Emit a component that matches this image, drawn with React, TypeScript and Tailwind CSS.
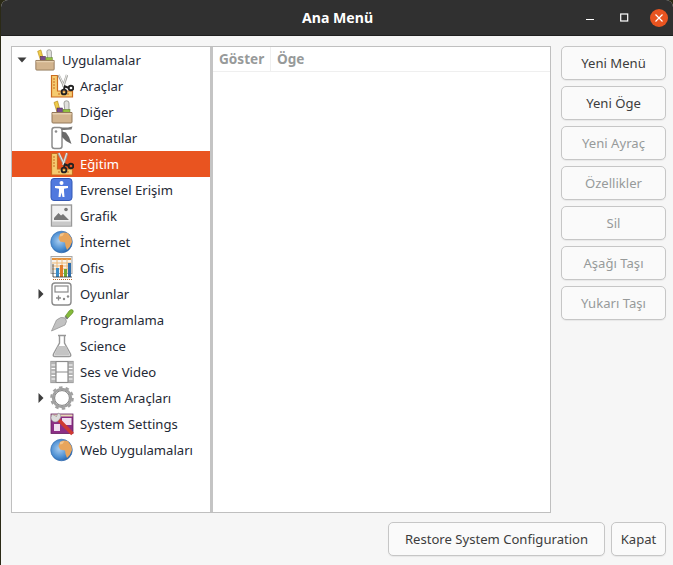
import React from "react";

const Toolbox = ({ s = 24 }: { s?: number }) => (
  <svg width={s} height={s} viewBox="0 0 24 24">
    <path d="M4 2.500 L7.500 1 L10.500 12 L7 12 Z" fill="#efcc4a" stroke="#b98d1b" strokeWidth=".7" />
    <path d="M14 3 Q14 0.800 16.500 0.800 Q19 0.800 19 3 V10 L15 12 Z" fill="#e0e0dc" stroke="#8b8b85" strokeWidth=".8" />
    <rect x="7" y="8" width="5.500" height="4.500" fill="#7a4a8c" stroke="#3f2348" strokeWidth=".5" />
    <rect x="13" y="9.500" width="7" height="3.500" fill="#93c040" stroke="#55761f" strokeWidth=".5" />
    <path d="M2 12.500 H22 V22 Q22 23 21 23 H3 Q2 23 2 22 Z" fill="#d2b48e" stroke="#93785a" strokeWidth="1" />
    <path d="M2.500 13 H21.500 V14.500 H2.500 Z" fill="#e6d0b0" />
  </svg>
);

const Ruler = () => (
  <svg width="24" height="24" viewBox="0 0 24 24">
    <path d="M1.500 1.500 H7.500 V17 H22.500 V23 H1.500 Z" fill="#f5cb70" stroke="#cb6b1e" strokeWidth="1.200" />
    <path d="M3 5h2M3 8h2M3 11h2M3 14h2M9 19v2M12 19v2M15 19v2M18 19v2" stroke="#cb6b1e" strokeWidth="1" />
    <path d="M8.500 1 L14.500 13 M17 1 L13 13" stroke="#a3a39f" strokeWidth="2.400" />
    <path d="M9 1 L14.500 13 M16.700 1 L13 13" stroke="#f2f2ef" strokeWidth=".9" />
    <circle cx="14" cy="18" r="2.400" fill="none" stroke="#222" strokeWidth="1.900" />
    <circle cx="21" cy="14" r="2.300" fill="none" stroke="#222" strokeWidth="1.900" />
    <path d="M14 12 L19 14 M14.500 13 L14 16" stroke="#222" strokeWidth="1.900" />
  </svg>
);

const Knife = () => (
  <svg width="24" height="24" viewBox="0 0 24 24">
    <rect x="2" y="1.500" width="10" height="21" rx="2.500" fill="#fff" stroke="#8c8c8c" strokeWidth="1.500" />
    <circle cx="6" cy="5.500" r="1.300" fill="#8c8c8c" />
    <path d="M11.500 1.500 H18 L22.500 0.500 L21.500 3.500 L14 4 L11.500 4 Z" fill="#777" />
    <path d="M12 5.500 L16 6.500 L19 11 L21.500 18 L16 15 L12 11 Z" fill="#6a6a6a" />
  </svg>
);

const Access = () => (
  <svg width="24" height="24" viewBox="0 0 24 24">
    <rect x="1" y="0.500" width="21" height="22" rx="3" fill="#5079de" stroke="#3358b5" strokeWidth="1" />
    <circle cx="11.500" cy="5" r="2" fill="#fff" />
    <path d="M5 8 H18 V10 L14 10.800 V13 L14.500 19 H12.500 L11.500 14.500 L10.500 19 H8.500 L9 13 V10.800 L5 10 Z" fill="#fff" />
  </svg>
);

const Graphic = () => (
  <svg width="24" height="24" viewBox="0 0 24 24">
    <rect x="1.500" y="1" width="20" height="21" fill="#f1f1f1" stroke="#999" strokeWidth="1.400" />
    <path d="M4 14 L8.500 9 L11 11.500 L13 10 L19 16 H4 Z" fill="#777" />
    <circle cx="16" cy="5.500" r="1.800" fill="#777" />
    <rect x="2" y="17.500" width="19" height="4" fill="#c9c9c9" />
  </svg>
);

const Globe = ({ id }: { id: string }) => (
  <svg width="24" height="24" viewBox="0 0 24 24">
    <defs>
      <radialGradient id={id} cx="40%" cy="45%" r="65%">
        <stop offset="0" stopColor="#a9cdf0" />
        <stop offset=".6" stopColor="#4d8fd2" />
        <stop offset="1" stopColor="#1f5ca6" />
      </radialGradient>
    </defs>
    <circle cx="11.500" cy="12" r="10.800" fill={`url(#${id})`} stroke="#2f68ad" strokeWidth=".6" />
    <path d="M10 4 Q14 1.500 18 3.200 L21.500 8 L22 12 Q20.500 17 17 20 L15.500 16 L15 12.500 L10 11.500 L8.500 8 Z" fill="#e8a55c" />
    <path d="M10 4 L14.500 3 L12.500 6 L10 6.500 Z" fill="#f2c48c" />
  </svg>
);

const Office = () => (
  <svg width="24" height="24" viewBox="0 0 24 24">
    <rect x="1" y="0.500" width="21" height="17" fill="#f4f2ee" stroke="#a7a7a7" strokeWidth="1" />
    <path d="M2 3h19" stroke="#e5933e" strokeWidth="2" />
    <path d="M2 7h19M2 10h19M2 13h19M7 3v14M12 3v14M17 3v14" stroke="#edb877" strokeWidth="1" />
    <rect x="6" y="12" width="3" height="9" fill="#3a8cc8" />
    <rect x="10" y="9" width="3" height="12" fill="#e07b2a" />
    <rect x="14" y="13" width="3" height="8" fill="#6fa933" />
    <rect x="18" y="7" width="3" height="14" fill="#2f6eab" />
    <path d="M3 8 V21 H22" fill="none" stroke="#333" strokeWidth=".8" />
    <path d="M3 23.500 H22" stroke="#b76a2a" strokeWidth="1" strokeDasharray="1 1" />
  </svg>
);

const Games = () => (
  <svg width="24" height="24" viewBox="0 0 24 24">
    <rect x="2" y="1" width="19" height="22" rx="3" fill="#fff" stroke="#8a8a8a" strokeWidth="1.400" />
    <rect x="5" y="4" width="13" height="6" fill="#fff" stroke="#8a8a8a" strokeWidth="1.200" />
    <path d="M6 16h5M8.500 13.500v5" stroke="#8a8a8a" strokeWidth="1.300" />
    <circle cx="14" cy="17" r="1.200" fill="#8a8a8a" />
    <circle cx="18" cy="14.500" r="1.200" fill="#8a8a8a" />
  </svg>
);

const Trowel = () => (
  <svg width="24" height="24" viewBox="0 0 24 24">
    <path d="M15 8.500 L19 3 Q21 0.500 22.800 2 Q24.200 3.800 21.800 6 L17.500 10.500 Z" fill="#85ba3c" stroke="#5a8524" strokeWidth=".6" />
    <path d="M15.500 8.500 L17.500 11" stroke="#777" strokeWidth="1.600" />
    <path d="M1.500 23 L6.500 12 Q11 8 15 10 Q18 13 15 17 Z" fill="#c2c2c2" stroke="#969696" strokeWidth=".8" />
  </svg>
);

const Flask = () => (
  <svg width="24" height="24" viewBox="0 0 24 24">
    <path d="M8 1.500 H16 M9.500 2 V9 L3.500 20 Q2.500 22.500 5 22.500 H19 Q21.500 22.500 20.500 20 L14.500 9 V2" fill="#fff" stroke="#979797" strokeWidth="1.400" />
    <path d="M8 12 H16 L20 21.500 H4 Z" fill="#c4c4c4" />
  </svg>
);

const Film = () => (
  <svg width="24" height="24" viewBox="0 0 24 24">
    <rect x="1" y="1.500" width="22" height="21" fill="#fff" stroke="#8c8c8c" strokeWidth="1.200" />
    <rect x="1" y="1.500" width="5" height="21" fill="#b5b5b5" />
    <rect x="18" y="1.500" width="5" height="21" fill="#b5b5b5" />
    <path d="M1.500 5h4M1.500 8.500h4M1.500 12h4M1.500 15.500h4M1.500 19h4M18.500 5h4M18.500 8.500h4M18.500 12h4M18.500 15.500h4M18.500 19h4" stroke="#fff" strokeWidth="1.200" />
    <path d="M6 12 H18 M6 1.500V22.500M18 1.500V22.500" stroke="#8c8c8c" strokeWidth="1.200" />
  </svg>
);

const Gear = () => (
  <svg width="24" height="24" viewBox="0 0 24 24">
    <circle cx="12" cy="12" r="9" fill="none" stroke="#a0a0a0" strokeWidth="2.400" />
    <circle cx="12" cy="12" r="10.800" fill="none" stroke="#a0a0a0" strokeWidth="2" strokeDasharray="3.500 3.290" />
    <circle cx="12" cy="12" r="7.400" fill="#fff" stroke="#7f7f7f" strokeWidth="1" />
  </svg>
);

const Settings = () => (
  <svg width="24" height="24" viewBox="0 0 24 24">
    <rect x="1" y="2" width="22" height="19.500" fill="#8c2f86" stroke="#652060" strokeWidth=".8" />
    <rect x="1.500" y="2.500" width="21" height="2" fill="#e8dcb5" />
    <rect x="4" y="12" width="6" height="7" fill="#f0dff0" />
    <rect x="12" y="6" width="9.500" height="7" fill="#f0dff0" />
    <path d="M7 6 L22.500 22" stroke="#cf3a32" strokeWidth="3.600" />
    <path d="M2.500 2.500 A4 4 0 0 0 8 9 L10.500 6 A4 4 0 0 0 8 1 L6.500 4.500 Z" fill="#dcdcdc" stroke="#888" strokeWidth=".5" />
  </svg>
);

const Tri = ({ open }: { open?: boolean }) => (
  <svg width="10" height="10" viewBox="0 0 10 10">
    {open ? <path d="M0.500 2.500 H9.500 L5 7.500 Z" fill="#3d3d3d" /> : <path d="M2.500 0 V10 L7.500 5 Z" fill="#3d3d3d" />}
  </svg>
);

const items: { label: string; icon: React.ReactNode; arrow?: boolean; selected?: boolean }[] = [
  { label: "Araçlar", icon: <Ruler /> },
  { label: "Diğer", icon: <Toolbox /> },
  { label: "Donatılar", icon: <Knife /> },
  { label: "Eğitim", icon: <Ruler />, selected: true },
  { label: "Evrensel Erişim", icon: <Access /> },
  { label: "Grafik", icon: <Graphic /> },
  { label: "İnternet", icon: <Globe id="globe-a" /> },
  { label: "Ofis", icon: <Office /> },
  { label: "Oyunlar", icon: <Games />, arrow: true },
  { label: "Programlama", icon: <Trowel /> },
  { label: "Science", icon: <Flask /> },
  { label: "Ses ve Video", icon: <Film /> },
  { label: "Sistem Araçları", icon: <Gear />, arrow: true },
  { label: "System Settings", icon: <Settings /> },
  { label: "Web Uygulamaları", icon: <Globe id="globe-b" /> },
];

const Btn = ({ children, disabled, className = "" }: { children: React.ReactNode; disabled?: boolean; className?: string }) => (
  <button
    className={`h-[34px] pt-[2px] rounded-[5px] border border-[#c6c6c6] bg-[#fafafa] text-[13.1px] shadow-[0_1px_1px_rgba(0,0,0,0.06)] ${disabled ? "text-[#979a9a]" : "text-[#3d3d3d]"} ${className}`}
  >
    {children}
  </button>
);

export default function App() {
  return (
    <div className="w-[673px] h-[565px] overflow-hidden bg-[#2b2a16] pl-px font-['Noto_Sans',sans-serif]">
      <div className="h-full flex flex-col bg-[#f6f6f6] rounded-t-[7px] overflow-hidden">
        <div className="h-[36px] shrink-0 flex items-center bg-[#303030] border-b border-[#1f1f1f] text-white">
          <span className="ml-[301px] text-[14.1px] font-bold">Ana Menü</span>
          <div className="ml-auto flex items-center">
            <svg width="10" height="10" viewBox="0 0 10 10" className="mr-[24px]">
              <path d="M1 6.500 H9" stroke="#fff" strokeWidth="1" />
            </svg>
            <svg width="10" height="10" viewBox="0 0 10 10" className="mr-[21px]">
              <rect x="1.700" y="1" width="7" height="7" fill="none" stroke="#fff" strokeWidth="1.200" />
            </svg>
            <svg width="18" height="18" viewBox="0 0 18 18" className="mr-[5px]">
              <circle cx="9" cy="9" r="9" fill="#e95420" />
              <path d="M5.500 5.500 L12.500 12.500 M12.500 5.500 L5.500 12.500" stroke="#fff" strokeWidth="1.200" />
            </svg>
          </div>
        </div>
        <div className="flex mt-[10px] ml-[10px] h-[467px]">
          <div className="w-[540px] flex border border-[#bfbfbf] bg-white">
            <div className="w-[198px] shrink-0 text-[13.1px] text-[#1f2a36]">
              <div className="flex items-center h-[26px]">
                <div className="w-[20px] flex justify-center">
                  <Tri open />
                </div>
                <div className="w-[22px] ml-[2px] flex justify-center"><Toolbox s={22} /></div>
                <span className="ml-[6px] pt-[2px]">Uygulamalar</span>
              </div>
              {items.map((it) => (
                <div key={it.label} className={`flex items-center h-[26px] ${it.selected ? "bg-[#e95420] text-white" : ""}`}>
                  <div className="w-[38px] flex justify-end pr-[4px]">{it.arrow && <Tri />}</div>
                  <div className="w-[24px] flex justify-center">{it.icon}</div>
                  <span className="ml-[6px] pt-[2px] whitespace-nowrap">{it.label}</span>
                </div>
              ))}
            </div>
            <div className="w-[3px] shrink-0 bg-[#c4c4c4]" />
            <div className="flex-1">
              <div className="h-[25px] flex items-center border-b border-[#efefef] text-[13.6px] font-bold text-[#979a9a]">
                <div className="w-[58px] h-full flex items-center border-r border-[#efefef] pl-[6px]">Göster</div>
                <div className="pl-[6px]">Öge</div>
              </div>
            </div>
          </div>
          <div className="ml-[10px] w-[105px] flex flex-col gap-[6px]">
            <Btn>Yeni Menü</Btn>
            <Btn>Yeni Öge</Btn>
            <Btn disabled>Yeni Ayraç</Btn>
            <Btn disabled>Özellikler</Btn>
            <Btn disabled>Sil</Btn>
            <Btn disabled>Aşağı Taşı</Btn>
            <Btn disabled>Yukarı Taşı</Btn>
          </div>
        </div>
        <div className="flex justify-end gap-[6px] mt-[9px] pr-[7px]">
          <Btn className="w-[217px]">Restore System Configuration</Btn>
          <Btn className="w-[55px]">Kapat</Btn>
        </div>
      </div>
    </div>
  );
}
